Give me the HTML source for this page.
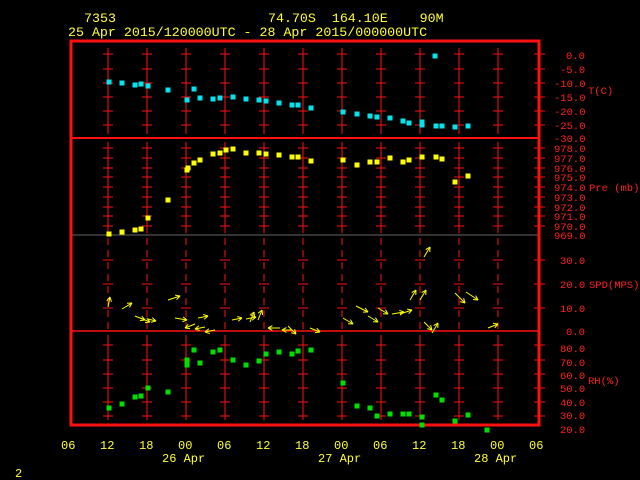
<!DOCTYPE html>
<html><head><meta charset="utf-8"><style>
html,body{margin:0;padding:0;background:#000;width:640px;height:480px;overflow:hidden}
svg{display:block}
text{font-family:"Liberation Mono","DejaVu Sans Mono",monospace}
.y{fill:#ffff33}.r{fill:#ff2020}
.t{font-size:13.3px}.a{font-size:10.5px}.b{font-size:12px}
</style></head><body>
<svg id="s" width="640" height="480" viewBox="0 0 640 480" xmlns="http://www.w3.org/2000/svg">
<g id="g"></g>
<text class="y t" x="84" y="22">7353</text>
<text class="y t" x="268" y="22" xml:space="preserve">74.70S  164.10E    90M</text>
<text class="y t" x="68" y="36">25 Apr 2015/120000UTC - 28 Apr 2015/000000UTC</text>
<g class="r a">
<text class="a" x="566" y="59">0.0</text><text class="a" x="560" y="73">-5.0</text><text class="a" x="554" y="87">-10.0</text><text class="a" x="554" y="101">-15.0</text><text class="a" x="554" y="115">-20.0</text><text class="a" x="554" y="129">-25.0</text><text class="a" x="554" y="142">-30.0</text>
<text class="a" x="554" y="152">978.0</text><text class="a" x="554" y="162">977.0</text><text class="a" x="554" y="172">976.0</text><text class="a" x="554" y="181">975.0</text><text class="a" x="554" y="191">974.0</text><text class="a" x="554" y="201">973.0</text><text class="a" x="554" y="211">972.0</text><text class="a" x="554" y="220">971.0</text><text class="a" x="554" y="230">970.0</text><text class="a" x="554" y="239">969.0</text>
<text class="a" x="560" y="264">30.0</text><text class="a" x="560" y="288">20.0</text><text class="a" x="560" y="312">10.0</text><text class="a" x="566" y="335">0.0</text>
<text class="a" x="560" y="352">80.0</text><text class="a" x="560" y="366">70.0</text><text class="a" x="560" y="379">60.0</text><text class="a" x="560" y="392">50.0</text><text class="a" x="560" y="406">40.0</text><text class="a" x="560" y="419">30.0</text><text class="a" x="560" y="433">20.0</text>
<text class="a" x="588" y="94">T(C)</text><text class="a" x="589" y="191">Pre (mb)</text><text class="a" x="589" y="288">SPD(MPS)</text><text class="a" x="588" y="384">RH(%)</text>
</g>
<g class="y b">
<text class="b" x="61" y="449">06</text><text class="b" x="100" y="449">12</text><text class="b" x="139" y="449">18</text><text class="b" x="178" y="449">00</text><text class="b" x="217" y="449">06</text><text class="b" x="256" y="449">12</text><text class="b" x="295" y="449">18</text><text class="b" x="334" y="449">00</text><text class="b" x="373" y="449">06</text><text class="b" x="412" y="449">12</text><text class="b" x="451" y="449">18</text><text class="b" x="490" y="449">00</text><text class="b" x="529" y="449">06</text>
<text class="b" x="162" y="462">26 Apr</text><text class="b" x="318" y="462">27 Apr</text><text class="b" x="474" y="462">28 Apr</text>
<text class="b" x="15" y="477">2</text>
</g>
</svg>
<script>
var g=document.getElementById('g'),h='';
function L(x1,y1,x2,y2,c,w){h+='<line x1="'+x1+'" y1="'+y1+'" x2="'+x2+'" y2="'+y2+'" stroke="'+c+'" stroke-width="'+(w||1)+'"/>';}
var R='#ff1010';
var xs=[108,147,186,225,264,303,342,381,420,459,498];
var ty=[54,69,83,97,111,125],py=[148,158,168,177,187,197,207,216,226],sy=[260,284,308],ry=[345,360,374,388,402,416];
xs.forEach(function(x){
 L(x,48,x,134,R);L(x,142,x,233,R);
 for(var y=238;y<330;y+=12)L(x,y,x,y+7,R);
 L(x,335,x,420,R);
 ty.concat(py,sy,ry).forEach(function(y){L(x-5,y,x+5,y,R);});
});
[54,69,83,97,111,125].concat(py,sy,ry).forEach(function(y){L(534,y,545,y,R);});
L(72,138,538,138,R,2);L(72,235,538,235,'#666',1);L(72,331,538,331,R,1.5);
h+='<rect x="71" y="41" width="468" height="384" fill="none" stroke="'+R+'" stroke-width="3"/>';
function P(a,c){a.forEach(function(p){h+='<rect x="'+(p[0]-2.5)+'" y="'+(p[1]-2.5)+'" width="5" height="5" fill="'+c+'"/>';});}
P([[109,82],[122,83],[135,85],[141,84],[148,86],[168,90],[194,89],[187,100],[200,98],[213,99],[220,98],[233,97],[246,99],[259,100],[266,101],[279,103],[292,105],[298,105],[311,108],[343,112],[357,114],[370,116],[377,117],[390,118],[403,121],[409,123],[422,122],[422,125],[435,56],[436,126],[442,126],[455,127],[468,126]],'#00e5ee');
P([[109,234],[122,232],[135,230],[141,229],[148,218],[168,200],[187,170],[188,168],[194,163],[200,160],[213,154],[220,153],[226,150],[233,149],[246,153],[259,153],[266,154],[279,155],[292,157],[298,157],[311,161],[343,160],[357,165],[370,162],[377,162],[390,158],[403,162],[409,160],[422,157],[436,157],[442,159],[455,182],[468,176]],'#ffff00');
P([[109,408],[122,404],[135,397],[141,396],[148,388],[168,392],[187,360],[187,365],[194,350],[200,363],[213,352],[220,350],[233,360],[246,365],[259,361],[266,354],[279,352],[292,354],[298,351],[311,350],[343,383],[357,406],[370,408],[377,416],[390,414],[403,414],[409,414],[422,417],[422,425],[436,395],[442,400],[455,421],[468,415],[487,430]],'#00e000');
var Y='#ffff00';
function A(x,y,dx,dy){var x2=x+dx,y2=y+dy,a=Math.atan2(dy,dx);L(x,y,x2,y2,Y);
L(x2,y2,x2-5*Math.cos(a-0.5),y2-5*Math.sin(a-0.5),Y);L(x2,y2,x2-5*Math.cos(a+0.5),y2-5*Math.sin(a+0.5),Y);}
[[108,307,2,-10],[122,309,10,-6],[135,316,10,4],[140,318,10,4],[148,319,8,2],[168,300,12,-4],[175,318,12,2],[195,324,-10,4],[198,318,10,-2],[205,327,-10,2],[215,330,-10,2],[232,320,10,-2],[246,319,10,-2],[250,322,4,-10],[258,320,4,-10],[280,328,-12,0],[288,326,8,8],[292,330,-10,0],[310,328,10,4],[343,318,10,6],[356,306,12,6],[368,316,10,6],[378,308,10,6],[392,314,12,-2],[400,314,12,-4],[410,300,6,-10],[420,300,6,-10],[424,257,6,-10],[424,322,8,8],[432,333,6,-10],[455,293,10,10],[466,292,12,8],[488,328,10,-4]].forEach(function(a){A(a[0],a[1],a[2],a[3]);});
g.innerHTML=h;
</script>
</body></html>
